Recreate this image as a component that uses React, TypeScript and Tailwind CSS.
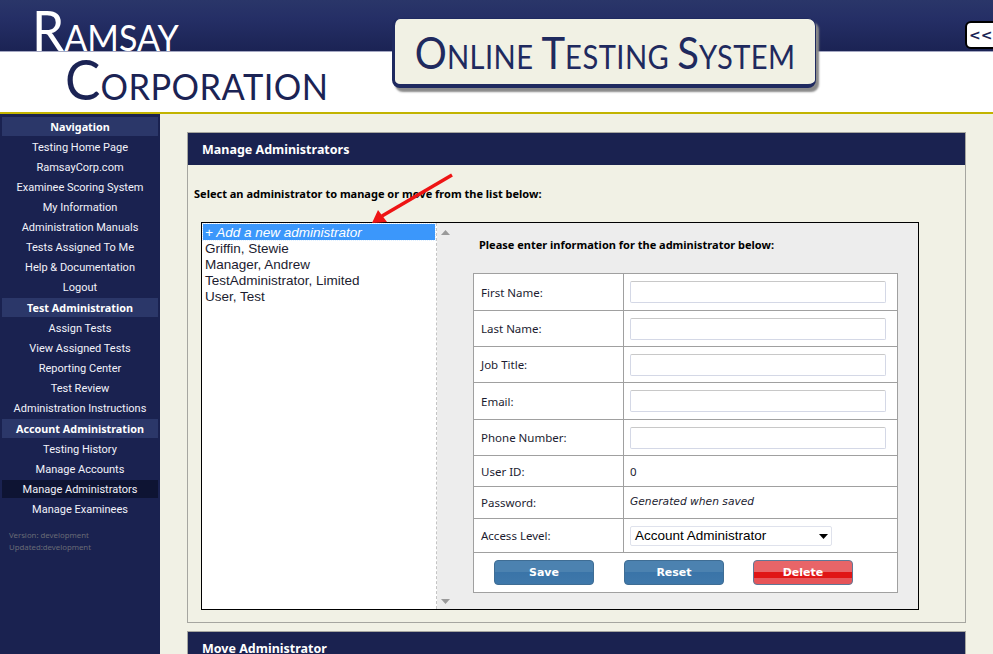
const nav: [string, string[]][] = [
  ["Navigation", ["Testing Home Page", "RamsayCorp.com", "Examinee Scoring System", "My Information", "Administration Manuals", "Tests Assigned To Me", "Help & Documentation", "Logout"]],
  ["Test Administration", ["Assign Tests", "View Assigned Tests", "Reporting Center", "Test Review", "Administration Instructions"]],
  ["Account Administration", ["Testing History", "Manage Accounts", "Manage Administrators", "Manage Examinees"]],
];
const ui = "font-['Noto_Sans',sans-serif]";
const admins = ["Griffin, Stewie", "Manager, Andrew", "TestAdministrator, Limited", "User, Test"];
const inputs: [string, string, string][] = [["First Name:", "h-[37px]", "pt-[1px]"], ["Last Name:", "h-[36px]", ""], ["Job Title:", "h-[36px]", ""], ["Email:", "h-[37px]", "pt-[1px]"], ["Phone Number:", "h-[36px]", ""]];

function Btn({ label, red, className }: { label: string; red?: boolean; className?: string }) {
  return (
    <button className={`w-[100px] h-[25px] pt-[1px] rounded-[4px] border text-white text-[11px] font-bold font-['DejaVu_Sans',sans-serif] ${className ?? ""} ${red ? "border-[#5f7896] bg-[linear-gradient(#e86568_0%,#e86568_50%,#e01515_50%,#e01515_75%,#e65458_75%)]" : "border-[#3f6d94] bg-[linear-gradient(#4c82b0_0%,#4c82b0_50%,#3a74a8_50%,#3f78aa_100%)]"}`}>
      {label}
    </button>
  );
}

export default function App() {
  return (
    <div className={`relative w-[993px] h-[654px] overflow-hidden bg-[#f1f1e5] flex flex-col text-black ${ui}`}>
      <header className="relative h-[114px] shrink-0 bg-white border-b-2 border-[#c2b400]">
        <div className="h-[52px] bg-[linear-gradient(#2a3669,#252f66_35%,#1b2354)] border-b border-[#a4a7c2]" />
        <div className="absolute left-[32px] top-[2px] h-[49px] overflow-hidden pr-[2px] origin-left scale-x-[0.92] text-white font-['Lato',sans-serif] leading-none whitespace-nowrap">
          <span className="text-[56px]">R</span><span className="text-[37px]">AMSAY</span>
        </div>
        <div className="absolute left-[65px] top-[50px] origin-left scale-x-[0.93] text-[#1b2354] font-['Lato',sans-serif] leading-none whitespace-nowrap">
          <span className="text-[57px]">C</span><span className="text-[37px] tracking-[0.5px]">ORPORATION</span>
        </div>
        <div className="absolute left-[392px] top-[18px] w-[424px] h-[70px] rounded-[8px] bg-[#f1f1e4] border-l-[3px] border-b-[4px] border-t border-r border-[#1f2a60] shadow-[3px_4px_2px_#8a8a8a] flex items-center justify-center text-[#1f2a5e] font-['Lato',sans-serif] whitespace-nowrap">
          <div className="scale-x-[0.91] pt-[2px]">
            <span className="text-[44px] leading-none">O</span><span className="text-[32px] leading-none tracking-[0.5px]">NLINE&nbsp;</span>
            <span className="text-[44px] leading-none">T</span><span className="text-[32px] leading-none tracking-[0.5px]">ESTING&nbsp;</span>
            <span className="text-[44px] leading-none">S</span><span className="text-[32px] leading-none tracking-[0.5px]">YSTEM</span>
          </div>
        </div>
        <button className="absolute left-[965px] top-[21px] w-[40px] h-[28px] rounded-[6px] bg-white border-2 border-black text-left pl-[2px] text-[14px] font-bold leading-none text-[#1b2354] font-['DejaVu_Sans',sans-serif]">&lt;&lt;</button>
      </header>

      <div className="flex flex-1 min-h-0">
        <aside className="w-[160px] shrink-0 bg-[#1a2250] pt-[2px] text-[11px] text-[#f2f2fa] font-['Roboto',sans-serif]">
          {nav.map(([h, items]) => (
            <div key={h}>
              <div className={`mx-[2px] my-[1px] h-[19px] pt-[1px] bg-[#2b3769] flex items-center justify-center font-bold text-[10.8px] text-white ${ui}`}>{h}</div>
              {items.map((t) => (
                <div key={t} className="h-5 flex items-center justify-center">
                  {t === "Manage Administrators" ? (
                    <span className="mx-[2px] w-[156px] h-[18px] pt-[2px] bg-[#0e1433] flex items-center justify-center">{t}</span>
                  ) : (
                    <span className="pt-[2px]">{t}</span>
                  )}
                </div>
              ))}
            </div>
          ))}
          <div className={`pl-[9px] pt-[10px] text-[7.8px] leading-[12px] text-[#696b76] ${ui}`}>
            <div>Version: development</div>
            <div>Updated:development</div>
          </div>
        </aside>

        <main className="flex-1 min-w-0 px-[27px] pt-[18px] flex flex-col gap-[8px]">
          <section className="h-[491px] shrink-0 border border-[#a6a6a0] flex flex-col">
            <h2 className="h-[32px] shrink-0 bg-[#1a2250] text-white font-bold text-[12.5px] pl-[14px] pt-[2px] flex items-center">Manage Administrators</h2>
            <p className="mt-[21px] ml-[6px] text-[11px] font-bold leading-[15px]">Select an administrator to manage or move from the list below:</p>
            <div className="mt-[21px] ml-[13px] w-[718px] h-[388px] border border-black bg-[#ededed] flex">
              <div className="w-[235px] shrink-0 bg-white pt-[1px] pl-[1px] border-r border-dashed border-[#c4c4c4] font-['Liberation_Sans',sans-serif] text-[13.5px] leading-[18px] text-[#1c1c30]">
                <div className="h-[16px] bg-[#3b97fb] text-white italic pl-[2px] mr-[1px] outline-1 outline-dotted outline-[#dfefff]">+ Add a new administrator</div>
                {admins.map((a) => <div key={a} className="h-[16px] pl-[2px]">{a}</div>)}
              </div>
              <div className="w-[16px] shrink-0 flex flex-col items-center justify-between pt-[7px] pb-[5px]">
                <svg width="9" height="5" viewBox="0 0 9 5"><path d="M4.5 0 9 5H0z" fill="#9a9a9a" /></svg>
                <svg width="9" height="5" viewBox="0 0 9 5"><path d="M0 0h9L4.5 5z" fill="#9a9a9a" /></svg>
              </div>
              <div className="flex-1 min-w-0 pl-[20px]">
                <p className="pt-[14px] pl-[6px] h-[50px] text-[11px] font-bold leading-[15px]">Please enter information for the administrator below:</p>
                <table className="w-[425px] border-collapse bg-white text-[11.5px] text-[#1c1c30] table-fixed">
                  <colgroup><col className="w-[150px]" /><col /></colgroup>
                  <tbody className="[&_td]:border [&_td]:border-[#a0a0a0] [&_td]:px-[7px]">
                    {inputs.map(([l, h, p]) => (
                      <tr key={l} className={h}>
                        <td className={p}>{l}</td>
                        <td className="!py-0 !pl-[6px]"><input className="block w-[256px] h-[22px] bg-white border border-[#d4d8e6] rounded-[2px] border-t-[#c8c8c8]" /></td>
                      </tr>
                    ))}
                    <tr className="h-[31px]"><td className="pt-[1px]">User ID:</td><td className="!pl-[6px] pt-[1px]">0</td></tr>
                    <tr className="h-[32px]"><td>Password:</td><td className="!pl-[6px] italic font-['DejaVu_Sans',sans-serif] text-[10.7px]">Generated when saved</td></tr>
                    <tr className="h-[34px]">
                      <td>Access Level:</td>
                      <td className="!pl-[6px]">
                        <div className="relative w-[202px] h-[20px] pt-[1px] border border-[#dfe2ec] rounded-[2px] pl-[4px] flex items-center font-['Liberation_Sans',sans-serif] text-[13.5px] text-black">
                          Account Administrator
                          <svg className="absolute right-[3px] top-[7px]" width="9" height="5" viewBox="0 0 9 5"><path d="M0 0h9L4.5 5z" fill="#000" /></svg>
                        </div>
                      </td>
                    </tr>
                    <tr className="h-[40px]">
                      <td colSpan={2} className="!px-0">
                        <div className="flex gap-[30px] pl-[20px]">
                          <Btn label="Save" />
                          <Btn label="Reset" />
                          <Btn label="Delete" red className="-ml-[1px]" />
                        </div>
                      </td>
                    </tr>
                  </tbody>
                </table>
              </div>
            </div>
          </section>
          <section className="border border-[#a6a6a0] border-b-0 flex-1">
            <h2 className="h-[32px] bg-[#1a2250] text-white font-bold text-[12.5px] pl-[14px] pt-[2px] flex items-center">Move Administrator</h2>
          </section>
        </main>
      </div>

      <svg className="absolute left-0 top-0 pointer-events-none" width="993" height="654" viewBox="0 0 993 654">
        <path d="M452 175 382 216" stroke="#ee1414" strokeWidth="3.5" fill="none" />
        <path d="M372 223 378 210 387 222z" fill="#ee1414" />
      </svg>
    </div>
  );
}
